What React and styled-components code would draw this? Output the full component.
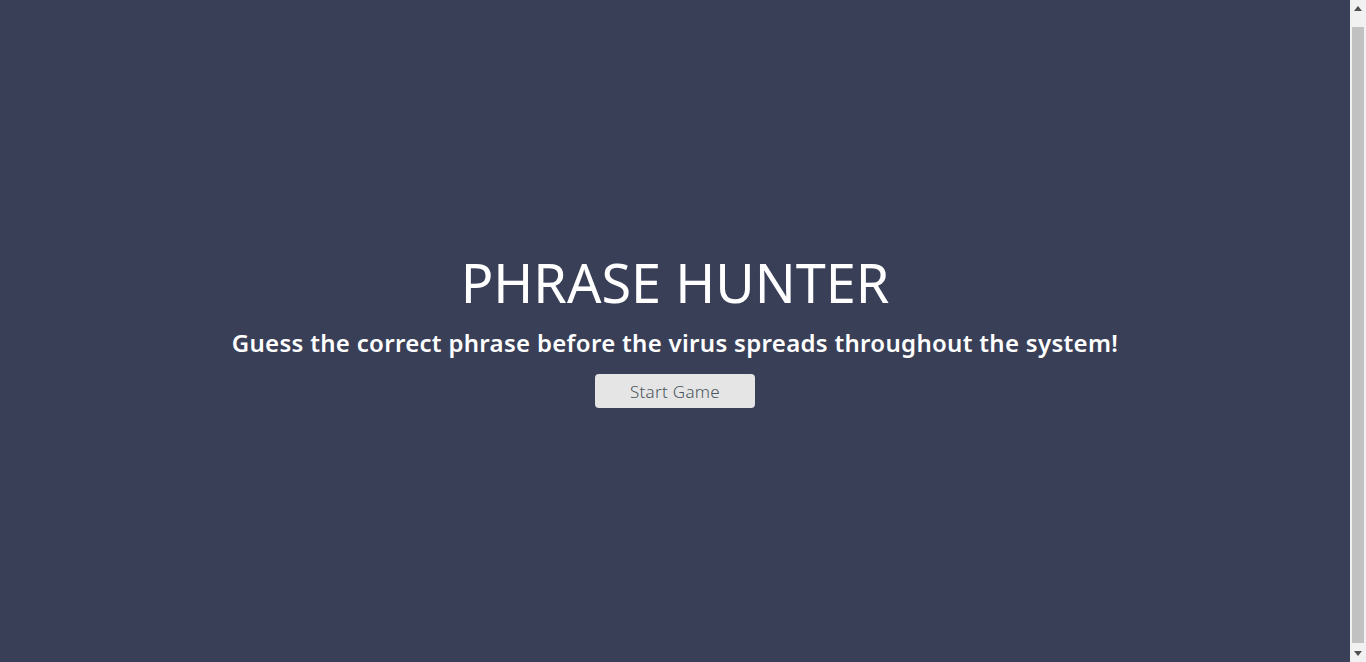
import React from "react";
import styled, { createGlobalStyle } from "styled-components";

const GlobalStyle = createGlobalStyle`
  html, body {
    margin: 0;
    padding: 0;
    overflow: hidden;
  }
  body {
    background: #3a3f58;
    font-family: "Noto Sans", "DejaVu Sans", sans-serif;
  }
`;

const Arrow = ({ down }) => (
  <svg width="8" height="5" viewBox="0 0 8 5">
    <polygon
      points={down ? "0,0 8,0 4,5" : "0,5 8,5 4,0"}
      fill="#505050"
    />
  </svg>
);

const App = () => {
  return (
    <>
      <GlobalStyle />
      <Page>
        <Overlay>
          <Title>PHRASE HUNTER</Title>
          <Subtitle>
            Guess the correct phrase before the virus spreads throughout the
            system!
          </Subtitle>
          <StartButton>Start Game</StartButton>
        </Overlay>
        <ScrollTrack>
          <ArrowBtn>
            <Arrow />
          </ArrowBtn>
          <Thumb />
          <ArrowBtn>
            <Arrow down />
          </ArrowBtn>
        </ScrollTrack>
      </Page>
    </>
  );
};

export default App;

// style
const Page = styled.div`
  display: flex;
  height: 100vh;
`;
const Overlay = styled.div`
  flex: 1;
  box-sizing: border-box;
  padding-bottom: 4px;
  display: flex;
  flex-direction: column;
  align-items: center;
  justify-content: center;
  background: #3a3f58;
  color: #fff;
  text-align: center;
`;
const Title = styled.h1`
  margin: 0;
  font-size: 54px;
  font-weight: 400;
  line-height: 1.2;
`;
const Subtitle = styled.h2`
  margin: 13px 0 16px;
  font-size: 24px;
  font-weight: 600;
  letter-spacing: 0.3px;
  line-height: 1.3;
`;
const StartButton = styled.button`
  width: 160px;
  height: 34px;
  padding: 0;
  border: none;
  border-radius: 4px;
  background: #e5e5e5;
  color: #4a5560;
  font-family: inherit;
  font-size: 17px;
  font-weight: 300;
  letter-spacing: 0.3px;
  cursor: pointer;
`;
const ScrollTrack = styled.div`
  width: 16px;
  display: flex;
  flex-direction: column;
  align-items: center;
  background: #f1f1f1;
`;
const ArrowBtn = styled.div`
  height: 17px;
  width: 100%;
  display: flex;
  align-items: center;
  justify-content: center;
`;
const Thumb = styled.div`
  flex: 1;
  width: 12px;
  margin: 10px 0 2px;
  background: #c1c1c1;
`;
